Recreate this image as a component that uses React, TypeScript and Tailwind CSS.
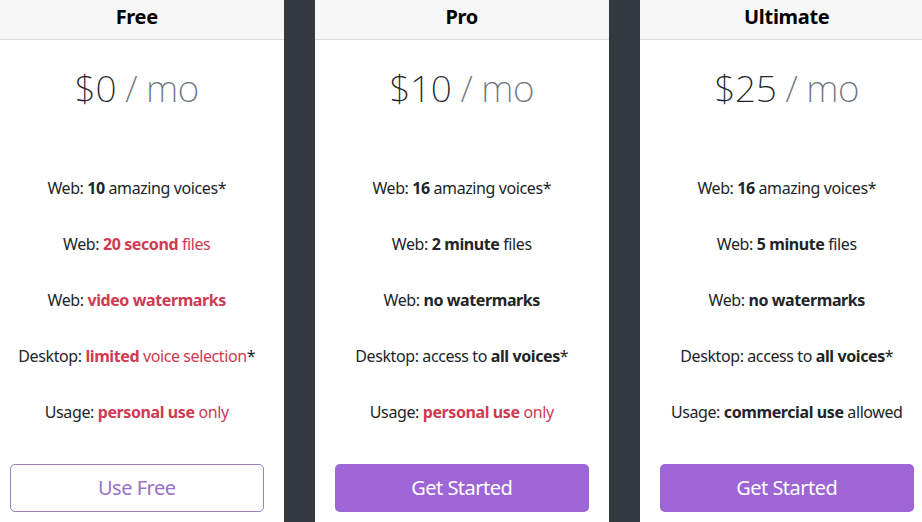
import React from 'react'

type Part = { t: string; b?: boolean; red?: boolean }

type Plan = {
  name: string
  price: string
  features: Part[][]
  cta: string
  outline?: boolean
}

const PLANS: Plan[] = [
  {
    name: 'Free',
    price: '$0',
    features: [
      [{ t: 'Web: ' }, { t: '10', b: true }, { t: ' amazing voices*' }],
      [{ t: 'Web: ' }, { t: '20 second', b: true, red: true }, { t: ' files', red: true }],
      [{ t: 'Web: ' }, { t: 'video watermarks', b: true, red: true }],
      [{ t: 'Desktop: ' }, { t: 'limited', b: true, red: true }, { t: ' voice selection', red: true }, { t: '*' }],
      [{ t: 'Usage: ' }, { t: 'personal use', b: true, red: true }, { t: ' only', red: true }],
    ],
    cta: 'Use Free',
    outline: true,
  },
  {
    name: 'Pro',
    price: '$10',
    features: [
      [{ t: 'Web: ' }, { t: '16', b: true }, { t: ' amazing voices*' }],
      [{ t: 'Web: ' }, { t: '2 minute', b: true }, { t: ' files' }],
      [{ t: 'Web: ' }, { t: 'no watermarks', b: true }],
      [{ t: 'Desktop: access to ' }, { t: 'all voices', b: true }, { t: '*' }],
      [{ t: 'Usage: ' }, { t: 'personal use', b: true, red: true }, { t: ' only', red: true }],
    ],
    cta: 'Get Started',
  },
  {
    name: 'Ultimate',
    price: '$25',
    features: [
      [{ t: 'Web: ' }, { t: '16', b: true }, { t: ' amazing voices*' }],
      [{ t: 'Web: ' }, { t: '5 minute', b: true }, { t: ' files' }],
      [{ t: 'Web: ' }, { t: 'no watermarks', b: true }],
      [{ t: 'Desktop: access to ' }, { t: 'all voices', b: true }, { t: '*' }],
      [{ t: 'Usage: ' }, { t: 'commercial use', b: true }, { t: ' allowed' }],
    ],
    cta: 'Get Started',
  },
]

function PlanCard({ plan }: { plan: Plan }) {
  return (
    <div className="w-[293.5px] shrink-0 bg-white flex flex-col">
      <div className="h-[40px] bg-[#f7f7f7] border-b border-[#dcdcdc] flex justify-center pt-[5px]">
        <h4 className="text-[20px] leading-6 font-bold text-black tracking-[-0.3px]">{plan.name}</h4>
      </div>
      <div className="px-5 flex flex-col items-center">
        <h1 className="mt-6 text-[37px] leading-[48px] font-extralight text-[#212529] tracking-[-0.5px]">
          {plan.price} <span className="text-[#6c757d]">/ mo</span>
        </h1>
        <ul className="mt-12 text-center text-[16px] leading-6 text-[#212529] tracking-[-0.4px]">
          {plan.features.map((f, i) => (
            <li key={i} className="py-4 whitespace-nowrap">
              {f.map((p, j) => (
                <span key={j} className={(p.b ? 'font-bold ' : '') + (p.red ? 'text-[#d03a52]' : '')}>
                  {p.t}
                </span>
              ))}
            </li>
          ))}
        </ul>
        <button
          className={
            plan.outline
              ? 'mt-6 w-full h-12 rounded-[5px] border border-[#9b7fba] bg-white text-[20px] tracking-[-0.5px] text-[#9b6fc8]'
              : 'mt-6 w-full h-12 rounded-[5px] bg-[#9d65d5] text-[20px] tracking-[-0.5px] text-white'
          }
        >
          {plan.cta}
        </button>
      </div>
    </div>
  )
}

export default function App() {
  return (
    <div
      className="w-[922px] h-[522px] overflow-hidden bg-[#343a40]"
      style={{ fontFamily: '"Noto Sans", "Open Sans", sans-serif' }}
    >
      <div className="flex gap-[31.5px] -ml-[10px] h-full">
        {PLANS.map((p) => (
          <PlanCard key={p.name} plan={p} />
        ))}
      </div>
    </div>
  )
}
